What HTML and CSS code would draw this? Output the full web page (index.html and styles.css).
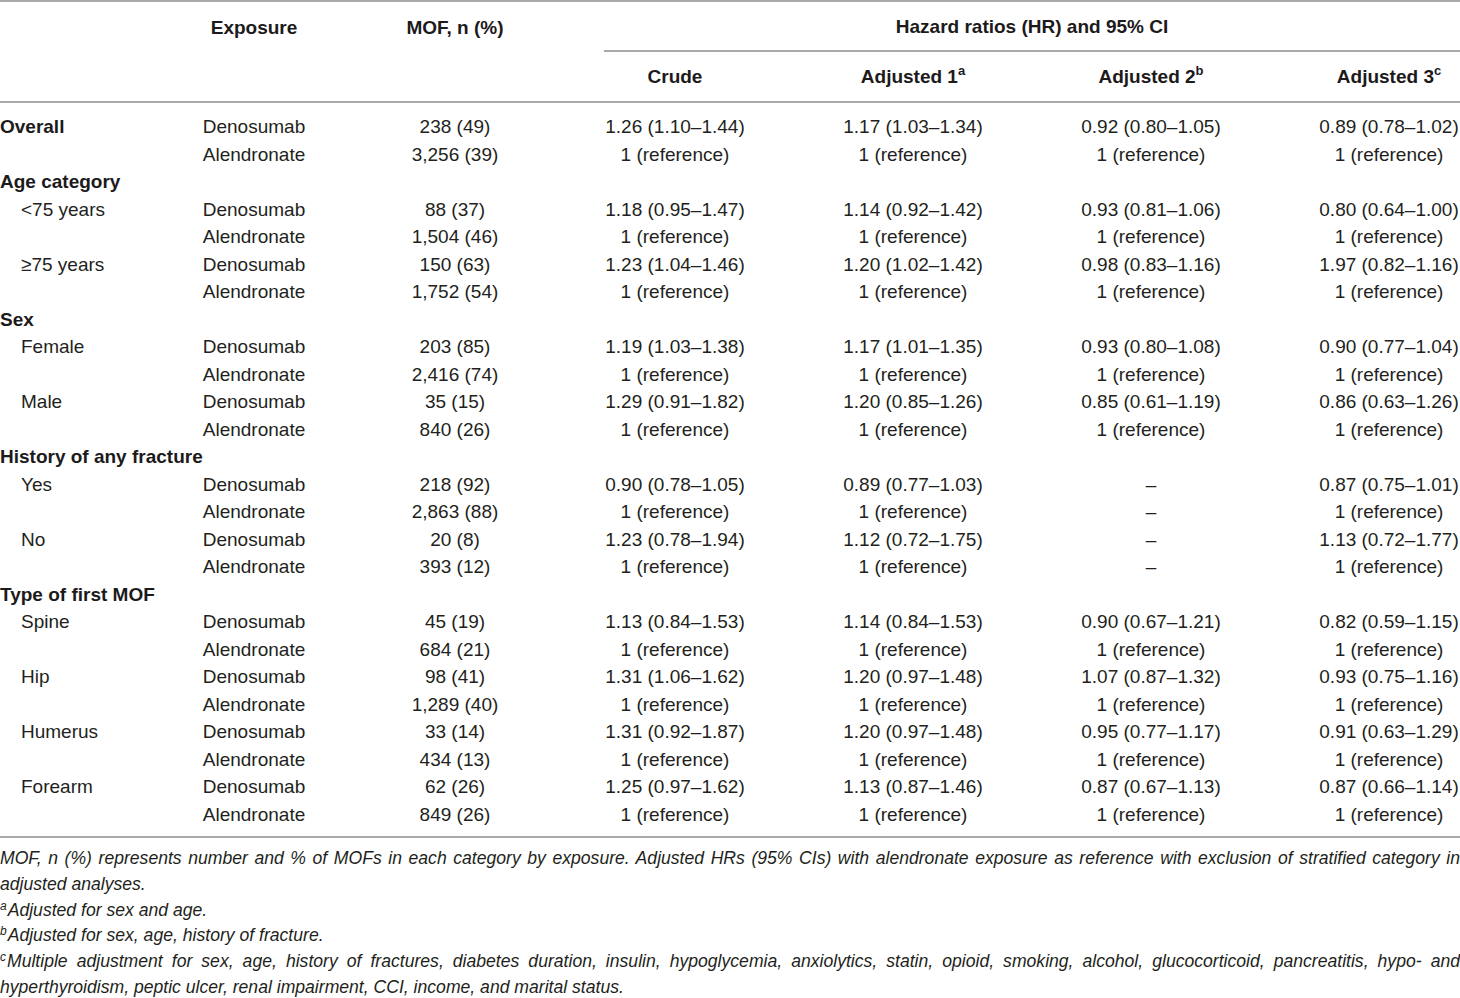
FILE: index.html
```html
<!DOCTYPE html>
<html lang="en">
<head>
<meta charset="utf-8">
<title>Table</title>
<link rel="stylesheet" href="styles.css">
</head>
<body>
<div class="page">
<table class="tbl">
  <colgroup>
    <col class="c-label"><col class="c-exp"><col class="c-mof"><col class="c-hr"><col class="c-hr"><col class="c-hr"><col class="c-hr">
  </colgroup>
  <thead>
    <tr class="h1">
      <th></th>
      <th class="ctr" rowspan="2"><span class="hpos">Exposure</span></th>
      <th class="mof" rowspan="2"><span class="hpos">MOF, n (%)</span></th>
      <th class="span" colspan="4"><div class="span-inner">Hazard ratios (HR) and 95% CI</div></th>
    </tr>
    <tr class="h2">
      <th></th>
      <th class="hr">Crude</th>
      <th class="hr">Adjusted 1<sup>a</sup></th>
      <th class="hr">Adjusted 2<sup>b</sup></th>
      <th class="hr">Adjusted 3<sup>c</sup></th>
    </tr>
  </thead>
  <tbody>
    <tr class="first"><td class="grp">Overall</td><td class="ctr">Denosumab</td><td class="mof">238 (49)</td><td class="hr">1.26 (1.10–1.44)</td><td class="hr">1.17 (1.03–1.34)</td><td class="hr">0.92 (0.80–1.05)</td><td class="hr">0.89 (0.78–1.02)</td></tr>
    <tr><td></td><td class="ctr">Alendronate</td><td class="mof">3,256 (39)</td><td class="hr">1 (reference)</td><td class="hr">1 (reference)</td><td class="hr">1 (reference)</td><td class="hr">1 (reference)</td></tr>
    <tr><td class="grp" colspan="7">Age category</td></tr>
    <tr><td class="sub">&lt;75 years</td><td class="ctr">Denosumab</td><td class="mof">88 (37)</td><td class="hr">1.18 (0.95–1.47)</td><td class="hr">1.14 (0.92–1.42)</td><td class="hr">0.93 (0.81–1.06)</td><td class="hr">0.80 (0.64–1.00)</td></tr>
    <tr><td></td><td class="ctr">Alendronate</td><td class="mof">1,504 (46)</td><td class="hr">1 (reference)</td><td class="hr">1 (reference)</td><td class="hr">1 (reference)</td><td class="hr">1 (reference)</td></tr>
    <tr><td class="sub">≥75 years</td><td class="ctr">Denosumab</td><td class="mof">150 (63)</td><td class="hr">1.23 (1.04–1.46)</td><td class="hr">1.20 (1.02–1.42)</td><td class="hr">0.98 (0.83–1.16)</td><td class="hr">1.97 (0.82–1.16)</td></tr>
    <tr><td></td><td class="ctr">Alendronate</td><td class="mof">1,752 (54)</td><td class="hr">1 (reference)</td><td class="hr">1 (reference)</td><td class="hr">1 (reference)</td><td class="hr">1 (reference)</td></tr>
    <tr><td class="grp" colspan="7">Sex</td></tr>
    <tr><td class="sub">Female</td><td class="ctr">Denosumab</td><td class="mof">203 (85)</td><td class="hr">1.19 (1.03–1.38)</td><td class="hr">1.17 (1.01–1.35)</td><td class="hr">0.93 (0.80–1.08)</td><td class="hr">0.90 (0.77–1.04)</td></tr>
    <tr><td></td><td class="ctr">Alendronate</td><td class="mof">2,416 (74)</td><td class="hr">1 (reference)</td><td class="hr">1 (reference)</td><td class="hr">1 (reference)</td><td class="hr">1 (reference)</td></tr>
    <tr><td class="sub">Male</td><td class="ctr">Denosumab</td><td class="mof">35 (15)</td><td class="hr">1.29 (0.91–1.82)</td><td class="hr">1.20 (0.85–1.26)</td><td class="hr">0.85 (0.61–1.19)</td><td class="hr">0.86 (0.63–1.26)</td></tr>
    <tr><td></td><td class="ctr">Alendronate</td><td class="mof">840 (26)</td><td class="hr">1 (reference)</td><td class="hr">1 (reference)</td><td class="hr">1 (reference)</td><td class="hr">1 (reference)</td></tr>
    <tr><td class="grp" colspan="7">History of any fracture</td></tr>
    <tr><td class="sub">Yes</td><td class="ctr">Denosumab</td><td class="mof">218 (92)</td><td class="hr">0.90 (0.78–1.05)</td><td class="hr">0.89 (0.77–1.03)</td><td class="hr">–</td><td class="hr">0.87 (0.75–1.01)</td></tr>
    <tr><td></td><td class="ctr">Alendronate</td><td class="mof">2,863 (88)</td><td class="hr">1 (reference)</td><td class="hr">1 (reference)</td><td class="hr">–</td><td class="hr">1 (reference)</td></tr>
    <tr><td class="sub">No</td><td class="ctr">Denosumab</td><td class="mof">20 (8)</td><td class="hr">1.23 (0.78–1.94)</td><td class="hr">1.12 (0.72–1.75)</td><td class="hr">–</td><td class="hr">1.13 (0.72–1.77)</td></tr>
    <tr><td></td><td class="ctr">Alendronate</td><td class="mof">393 (12)</td><td class="hr">1 (reference)</td><td class="hr">1 (reference)</td><td class="hr">–</td><td class="hr">1 (reference)</td></tr>
    <tr><td class="grp" colspan="7">Type of first MOF</td></tr>
    <tr><td class="sub">Spine</td><td class="ctr">Denosumab</td><td class="mof">45 (19)</td><td class="hr">1.13 (0.84–1.53)</td><td class="hr">1.14 (0.84–1.53)</td><td class="hr">0.90 (0.67–1.21)</td><td class="hr">0.82 (0.59–1.15)</td></tr>
    <tr><td></td><td class="ctr">Alendronate</td><td class="mof">684 (21)</td><td class="hr">1 (reference)</td><td class="hr">1 (reference)</td><td class="hr">1 (reference)</td><td class="hr">1 (reference)</td></tr>
    <tr><td class="sub">Hip</td><td class="ctr">Denosumab</td><td class="mof">98 (41)</td><td class="hr">1.31 (1.06–1.62)</td><td class="hr">1.20 (0.97–1.48)</td><td class="hr">1.07 (0.87–1.32)</td><td class="hr">0.93 (0.75–1.16)</td></tr>
    <tr><td></td><td class="ctr">Alendronate</td><td class="mof">1,289 (40)</td><td class="hr">1 (reference)</td><td class="hr">1 (reference)</td><td class="hr">1 (reference)</td><td class="hr">1 (reference)</td></tr>
    <tr><td class="sub">Humerus</td><td class="ctr">Denosumab</td><td class="mof">33 (14)</td><td class="hr">1.31 (0.92–1.87)</td><td class="hr">1.20 (0.97–1.48)</td><td class="hr">0.95 (0.77–1.17)</td><td class="hr">0.91 (0.63–1.29)</td></tr>
    <tr><td></td><td class="ctr">Alendronate</td><td class="mof">434 (13)</td><td class="hr">1 (reference)</td><td class="hr">1 (reference)</td><td class="hr">1 (reference)</td><td class="hr">1 (reference)</td></tr>
    <tr><td class="sub">Forearm</td><td class="ctr">Denosumab</td><td class="mof">62 (26)</td><td class="hr">1.25 (0.97–1.62)</td><td class="hr">1.13 (0.87–1.46)</td><td class="hr">0.87 (0.67–1.13)</td><td class="hr">0.87 (0.66–1.14)</td></tr>
    <tr class="last"><td></td><td class="ctr">Alendronate</td><td class="mof">849 (26)</td><td class="hr">1 (reference)</td><td class="hr">1 (reference)</td><td class="hr">1 (reference)</td><td class="hr">1 (reference)</td></tr>
  </tbody>
</table>
<div class="notes">
  <p class="note">MOF, n (%) represents number and % of MOFs in each category by exposure. Adjusted HRs (95% CIs) with alendronate exposure as reference with exclusion of stratified category in adjusted analyses.</p>
  <p class="note"><sup>a</sup>Adjusted for sex and age.</p>
  <p class="note"><sup>b</sup>Adjusted for sex, age, history of fracture.</p>
  <p class="note"><sup>c</sup>Multiple adjustment for sex, age, history of fractures, diabetes duration, insulin, hypoglycemia, anxiolytics, statin, opioid, smoking, alcohol, glucocorticoid, pancreatitis, hypo- and hyperthyroidism, peptic ulcer, renal impairment, CCI, income, and marital status.</p>
</div>
</div>
</body>
</html>
```

FILE: styles.css
```css
html, body {
  margin: 0;
  padding: 0;
  background: #ffffff;
}

.page {
  width: 1460px;
  color: #231f20;
  font-family: "Liberation Sans", Arial, Helvetica, sans-serif;
}

.tbl {
  width: 1460px;
  border-collapse: collapse;
  border-spacing: 0;
  table-layout: fixed;
  font-size: 19px;
}

.c-label { width: 190px; }
.c-exp { width: 128px; }
.c-mof { width: 190px; }
.c-hr { width: 238px; }

.tbl th,
.tbl td {
  padding: 0;
  white-space: nowrap;
}

.tbl th {
  font-weight: bold;
  color: #1c1a1b;
}

.tbl thead tr.h1 {
  border-top: 2px solid #a9a9a9;
  height: 52px;
}

.tbl thead tr.h2 {
  height: 49px;
  border-bottom: 2px solid #a9a9a9;
}

.tbl thead th.ctr,
.tbl thead th.mof {
  vertical-align: top;
}

.hpos {
  display: block;
  padding-top: 14px;
  line-height: 24px;
}

.tbl th.span {
  padding-left: 96px;
  vertical-align: top;
}

.span-inner {
  border-bottom: 2px solid #a9a9a9;
  text-align: center;
  height: 50px;
  line-height: 24px;
  box-sizing: border-box;
  padding-top: 13px;
}

.tbl th.hr {
  padding-left: 96px;
  text-align: center;
  line-height: 24px;
}

.tbl sup {
  font-size: 13px;
  line-height: 0;
  vertical-align: 8px;
  font-weight: bold;
}

.tbl tbody td {
  height: 27.5px;
  line-height: 27.5px;
}

.tbl tbody tr.first td {
  padding-top: 10px;
}

.tbl tbody tr.last td {
  padding-bottom: 8px;
}

.tbl tbody tr.last {
  border-bottom: 2px solid #a9a9a9;
}

.tbl td.grp {
  font-weight: bold;
  color: #1c1a1b;
}

.tbl td.sub {
  padding-left: 21px;
}

.tbl .ctr {
  text-align: center;
}

.tbl td.mof,
.tbl th.mof {
  padding-left: 84px;
  text-align: center;
}

.tbl td.hr {
  padding-left: 96px;
  text-align: center;
}

.notes {
  padding-top: 8px;
}

.note {
  margin: 0;
  font-style: italic;
  font-size: 17.6px;
  line-height: 25.8px;
  text-align: justify;
}

.note sup {
  font-size: 12px;
  line-height: 0;
  vertical-align: 6px;
  margin-right: 1px;
}
```
